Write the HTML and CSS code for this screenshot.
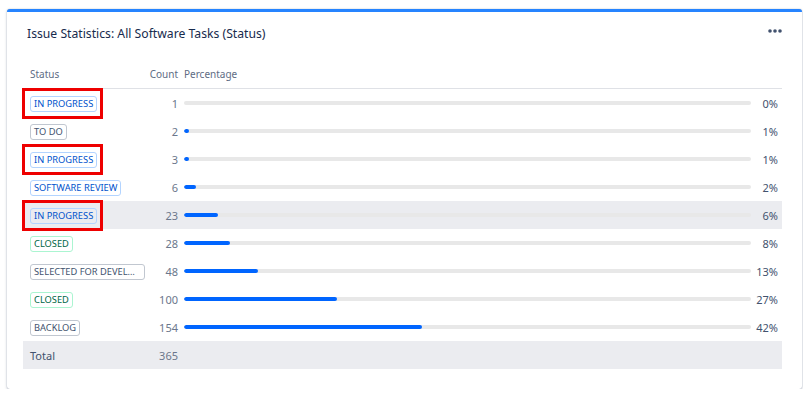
FILE: index.html
```html
<!DOCTYPE html>
<html lang="en">
  <head>
    <meta charset="UTF-8" />
    <title>Issue Statistics</title>
    <link rel="stylesheet" href="styles.css">
  </head>
  <body>
    <div class="gadget">
      <div class="gadget-header">
        <h2>Issue Statistics: All Software Tasks (Status)</h2>
        <svg class="more" width="14" height="4" viewBox="0 0 14 4">
          <circle cx="2" cy="2" r="1.8" />
          <circle cx="7" cy="2" r="1.8" />
          <circle cx="12" cy="2" r="1.8" />
        </svg>
      </div>
      <div class="stats">
        <div class="row head">
          <div class="status">Status</div>
          <div class="count">Count</div>
          <div class="bar-cell">Percentage</div>
          <div class="pct"></div>
        </div>
        <div class="row">
          <div class="status"><span class="lozenge blue marked">IN PROGRESS</span></div>
          <div class="count">1</div>
          <div class="bar-cell"><div class="track"></div></div>
          <div class="pct">0%</div>
        </div>
        <div class="row">
          <div class="status"><span class="lozenge grey">TO DO</span></div>
          <div class="count">2</div>
          <div class="bar-cell"><div class="track"><div class="fill" style="width: 0.9%"></div></div></div>
          <div class="pct">1%</div>
        </div>
        <div class="row">
          <div class="status"><span class="lozenge blue marked">IN PROGRESS</span></div>
          <div class="count">3</div>
          <div class="bar-cell"><div class="track"><div class="fill" style="width: 0.9%"></div></div></div>
          <div class="pct">1%</div>
        </div>
        <div class="row">
          <div class="status"><span class="lozenge blue">SOFTWARE REVIEW</span></div>
          <div class="count">6</div>
          <div class="bar-cell"><div class="track"><div class="fill" style="width: 2.1%"></div></div></div>
          <div class="pct">2%</div>
        </div>
        <div class="row hover">
          <div class="status"><span class="lozenge blue marked">IN PROGRESS</span></div>
          <div class="count">23</div>
          <div class="bar-cell"><div class="track"><div class="fill" style="width: 6%"></div></div></div>
          <div class="pct">6%</div>
        </div>
        <div class="row">
          <div class="status"><span class="lozenge green">CLOSED</span></div>
          <div class="count">28</div>
          <div class="bar-cell"><div class="track"><div class="fill" style="width: 8.1%"></div></div></div>
          <div class="pct">8%</div>
        </div>
        <div class="row">
          <div class="status"><span class="lozenge grey">SELECTED FOR DEVELOPMENT</span></div>
          <div class="count">48</div>
          <div class="bar-cell"><div class="track"><div class="fill" style="width: 13.1%"></div></div></div>
          <div class="pct">13%</div>
        </div>
        <div class="row">
          <div class="status"><span class="lozenge green">CLOSED</span></div>
          <div class="count">100</div>
          <div class="bar-cell"><div class="track"><div class="fill" style="width: 27%"></div></div></div>
          <div class="pct">27%</div>
        </div>
        <div class="row">
          <div class="status"><span class="lozenge grey">BACKLOG</span></div>
          <div class="count">154</div>
          <div class="bar-cell"><div class="track"><div class="fill" style="width: 42%"></div></div></div>
          <div class="pct">42%</div>
        </div>
        <div class="row total">
          <div class="status">Total</div>
          <div class="count">365</div>
          <div class="bar-cell"></div>
          <div class="pct"></div>
        </div>
      </div>
    </div>
  </body>
</html>
```

FILE: styles.css
```css
body {
  margin: 0;
  padding: 9px 1px 0 7px;
  background-color: #ffffff;
  font-family: "Noto Sans", "Open Sans", Arial, sans-serif;
  color: #172b4d;
}
.gadget {
  width: 795px;
  box-sizing: border-box;
  border-top: 3px solid #2684ff;
  border-radius: 3px;
  background-color: white;
  box-shadow: 0 1px 3px rgba(9, 30, 66, 0.25), 0 0 1px rgba(9, 30, 66, 0.35);
  padding: 0 20px 20px 16px;
}
.gadget-header {
  display: flex;
  justify-content: space-between;
  align-items: center;
  height: 20px;
  padding: 12px 0 16px 4px;
}
.gadget-header h2 {
  margin: 0;
  font-size: 12.2px;
  font-weight: normal;
  line-height: 20px;
  color: #172b4d;
}
.more {
  fill: #42526e;
  margin-top: -6px;
}
.row {
  display: grid;
  grid-template-columns: 122px 33px 1fr 31px;
  align-items: center;
  height: 28px;
  font-size: 11px;
}
.row.head {
  height: 28px;
  border-bottom: 1px solid #dfe1e6;
  color: #5e6c84;
  font-size: 10px;
}
.row.hover,
.row.total {
  background-color: #ebecf0;
}
.row.total {
  color: #42526e;
}
.status {
  padding-left: 7px;
  min-width: 0;
}
.count {
  text-align: right;
  color: #6b778c;
}
.row.head .count {
  color: #5e6c84;
}
.bar-cell {
  padding-left: 6px;
}
.track {
  height: 4px;
  border-radius: 2px;
  background-color: #e8e8e8;
  overflow: hidden;
}
.fill {
  height: 4px;
  min-width: 5px;
  border-radius: 2px;
  background-color: #0065ff;
}
.pct {
  text-align: right;
  padding-right: 4px;
  color: #42526e;
}
.lozenge {
  position: relative;
  display: inline-block;
  max-width: 115px;
  box-sizing: border-box;
  padding: 0 3px;
  border: 1px solid;
  border-radius: 3px;
  font-size: 9.3px;
  line-height: 14px;
  vertical-align: middle;
  white-space: nowrap;
  text-overflow: ellipsis;
}
.lozenge.grey {
  border-color: #c1c7d0;
  color: #42526e;
  overflow: hidden;
}
.lozenge.blue {
  border-color: #b3d4ff;
  color: #0052cc;
}
.lozenge.green {
  border-color: #abf5d1;
  color: #006644;
}
.lozenge.marked::after {
  content: "";
  position: absolute;
  left: -9px;
  right: -7px;
  top: -9px;
  bottom: -8px;
  border: 3px solid #ee0000;
}
```
